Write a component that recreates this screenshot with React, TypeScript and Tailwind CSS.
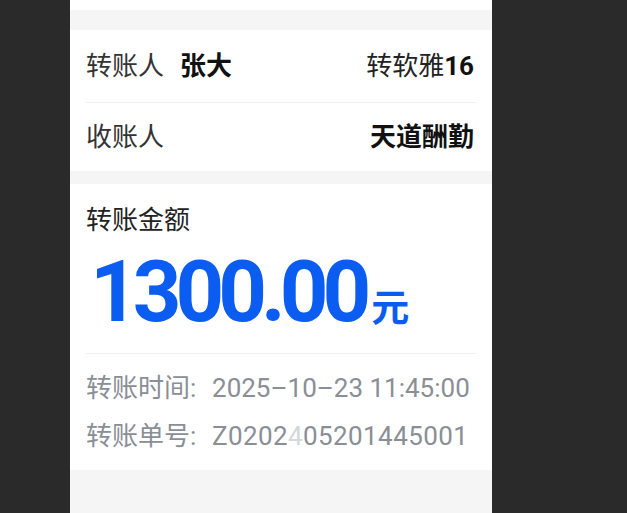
export default function App() {
  const font = { fontFamily: 'Roboto, "Noto Sans CJK SC", sans-serif' }

  return (
    <div className="flex h-[513px] w-[627px] overflow-hidden bg-[#2a2a2a]" style={font}>
      <div className="ml-[70px] flex w-[422px] flex-col bg-[#f5f5f5]">
        <div className="h-[10px] bg-white" />
        <div className="h-[20px]" />

        {/* 转账人 / 收账人 */}
        <div className="bg-white px-4">
          <div className="flex h-[72px] items-center justify-between text-[26px]">
            <div className="flex items-center">
              <span className="text-[#333]">转账人</span>
              <span className="ml-[16px] font-bold text-[#111]">张大</span>
            </div>
            <div className="mr-[2px] flex items-center">
              <span className="text-[#222]">转软雅</span>
              <span className="font-bold text-[#111]">16</span>
            </div>
          </div>
          <div className="h-px bg-[#f0f0f0]" />
          <div className="flex h-[68px] items-center justify-between text-[26px]">
            <span className="text-[#333]">收账人</span>
            <span className="mr-[2px] font-bold text-[#111]">天道酬勤</span>
          </div>
        </div>

        <div className="h-[13px]" />

        {/* 金额 */}
        <div className="bg-white px-4 pb-[10px] pt-[18px]">
          <div className="text-[26px] leading-[36px] text-[#222]">转账金额</div>
          <div className="mt-[12px] flex items-baseline pl-[4px] text-[#0b5cf0]">
            <span className="text-[85px] font-bold leading-none tracking-[-6px]">1300.00</span>
            <span className="ml-[6px] text-[38px] font-bold leading-none">元</span>
          </div>
          <div className="mt-[18px] h-px bg-[#f0f0f0]" />
          <div className="mt-[10px] text-[26px] text-[#8a8e96]">
            <div className="flex h-[48px] items-center">
              <span>转账时间</span>
              <span className="w-[22px]">:</span>
              <span>2025–10–23 11:45:00</span>
            </div>
            <div className="flex h-[48px] items-center">
              <span>转账单号</span>
              <span className="w-[22px]">:</span>
              <span className="tracking-[0.4px]">
                Z0202<span className="text-[#d4d7dc]">4</span>05201445001
              </span>
            </div>
          </div>
        </div>

        <div className="flex-1" />
      </div>
    </div>
  )
}
